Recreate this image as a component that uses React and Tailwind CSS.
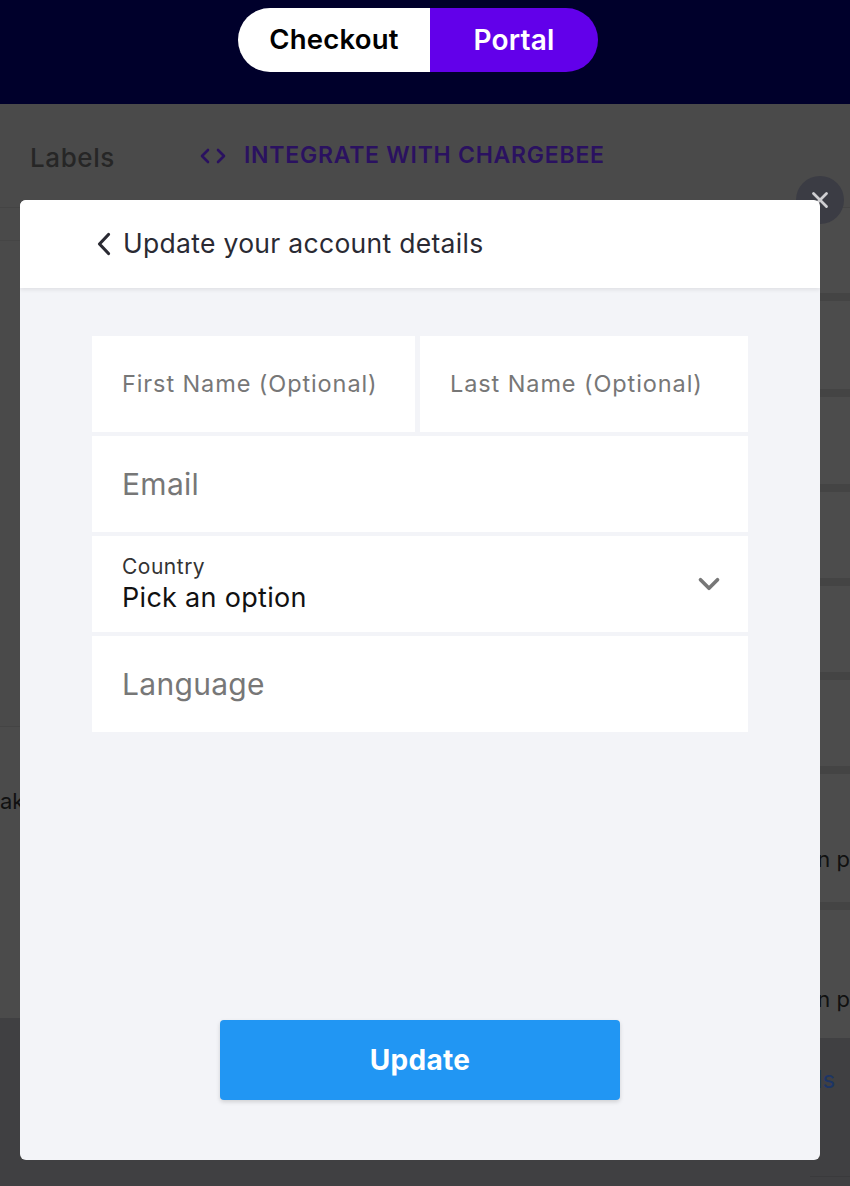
import { ChevronDown, X } from 'lucide-react';

const font = { fontFamily: 'Inter, "Noto Sans", sans-serif' };

// one white input cell of the form
const Field = ({ children, className = '' }) => (
  <div className={`h-[96px] bg-white flex flex-col justify-center pl-[30px] pr-[30px] ${className}`}>
    {children}
  </div>
);

const App = () => {
  return (
    <div className="relative w-[850px] h-[1186px] overflow-hidden bg-[#404042]" style={font}>
      {/* Top bar */}
      <div className="h-[104px] bg-[#00002b] pl-[238px] pt-[8px]">
        <div className="flex w-[360px] h-[64px] rounded-full overflow-hidden">
          <div className="w-[192px] bg-white flex items-center justify-center text-[27.5px] font-semibold text-black tracking-[0.2px]">
            Checkout
          </div>
          <div className="flex-1 bg-[#6200ea] flex items-center justify-center text-[28px] font-semibold text-white tracking-[0.2px]">
            Portal
          </div>
        </div>
      </div>

      {/* Dimmed page underneath */}
      <div>
        <div className="h-[104px] bg-[#4a4a4a] flex items-center border-b border-[#444444]">
          <span className="pl-[30px] w-[200px] text-[26px] font-medium text-[#262626] tracking-[0.6px] pt-[4px]">Labels</span>
          <div className="flex items-center gap-[18px] text-[#2a1160]">
            <svg width="26" height="18" viewBox="0 0 26 18" fill="none" stroke="currentColor" strokeWidth="2.6" strokeLinecap="round" strokeLinejoin="round">
              <path d="M8 3 L2 9 L8 15" />
              <path d="M18 3 L24 9 L18 15" />
            </svg>
            <span className="text-[23px] font-semibold tracking-[0.75px]">INTEGRATE WITH CHARGEBEE</span>
          </div>
        </div>

        <div className="flex items-start">
          {/* left column */}
          <div className="w-[425px] flex flex-col bg-[#4a4a4a]">
            <div className="h-[32px]" />
            <div className="h-[486px] border-t border-[#454545]" />
            <div className="h-[292px] bg-[#4b4b4b] border-t border-[#444444] pt-[58px]">
              <span className="text-[22px] text-[#111]">ake</span>
            </div>
          </div>
          {/* right column */}
          <div className="flex-1 flex flex-col gap-[8px] bg-[#444444] overflow-hidden">
            <div className="h-[85px] bg-[#4c4c4c]" />
            <div className="h-[88px] bg-[#4c4c4c]" />
            <div className="h-[87px] bg-[#4c4c4c]" />
            <div className="h-[86px] bg-[#4c4c4c]" />
            <div className="h-[86px] bg-[#4c4c4c]" />
            <div className="h-[86px] bg-[#4c4c4c]" />
            <div className="h-[128px] bg-[#4c4c4c] flex items-end justify-end pb-[26px]">
              <span className="text-[22px] text-[#111] whitespace-nowrap">en p</span>
            </div>
            <div className="h-[128px] bg-[#4c4c4c] flex items-end justify-end pb-[22px]">
              <span className="text-[22px] text-[#111] whitespace-nowrap">en p</span>
            </div>
          </div>
        </div>
      </div>

      {/* bottom strip of page on the right */}
      <div className="absolute right-0 top-[1038px] w-[40px] h-[139px] pt-[24px] border-b border-[#3a3a3c]">
        <span className="block text-[24px] text-[#1c3566] whitespace-nowrap -ml-[8px]">lds</span>
      </div>

      {/* Modal */}
      <div className="absolute left-[20px] top-[200px] w-[800px] h-[960px] rounded-[6px] bg-[#f3f4f8] flex flex-col overflow-hidden">
        <div className="h-[88px] bg-white shadow-[0_2px_4px_rgba(0,0,0,0.08)] flex items-center pl-[77px] gap-[12px] relative z-10">
          <svg width="14" height="24" viewBox="0 0 14 24" fill="none" stroke="#2a2a33" strokeWidth="3.2" strokeLinecap="round" strokeLinejoin="round">
            <path d="M11.5 2.5 L2.5 12 L11.5 21.5" />
          </svg>
          <span className="text-[26.5px] text-[#2a2a33] tracking-[0.3px]">Update your account details</span>
        </div>

        <div className="px-[72px] pt-[48px] flex flex-col gap-[4px]">
          <div className="flex gap-[5px]">
            <Field className="w-[323px]">
              <span className="text-[23.5px] text-[#777777] tracking-[0.9px] whitespace-nowrap">First Name (Optional)</span>
            </Field>
            <Field className="flex-1">
              <span className="text-[23.5px] text-[#777777] tracking-[0.9px] whitespace-nowrap">Last Name (Optional)</span>
            </Field>
          </div>
          <Field>
            <span className="text-[30px] text-[#777777] tracking-[0.3px]">Email</span>
          </Field>
          <Field className="relative">
            <span className="text-[21px] text-[#333333] leading-[28px] tracking-[0.5px]">Country</span>
            <span className="text-[27px] text-[#111111] leading-[34px] tracking-[0.3px]">Pick an option</span>
            <ChevronDown size={34} strokeWidth={2.6} className="absolute right-[22px] top-[31px] text-[#777777]" />
          </Field>
          <Field>
            <span className="text-[30px] text-[#777777] tracking-[0.3px]">Language</span>
          </Field>
        </div>

        <div className="mt-auto pb-[60px] flex justify-center">
          <button className="w-[400px] h-[80px] rounded-[4px] bg-[#2196f3] shadow-[0_2px_4px_rgba(0,0,0,0.15)] text-white text-[28px] font-bold tracking-[0.3px]">
            Update
          </button>
        </div>
      </div>

      {/* Close button */}
      <button className="absolute left-[796px] top-[176px] w-[48px] h-[48px] rounded-full bg-[#3b3c44] flex items-center justify-center">
        <X size={26} strokeWidth={2.6} className="text-[#cfcfd2]" />
      </button>
    </div>
  );
};

export default App;
